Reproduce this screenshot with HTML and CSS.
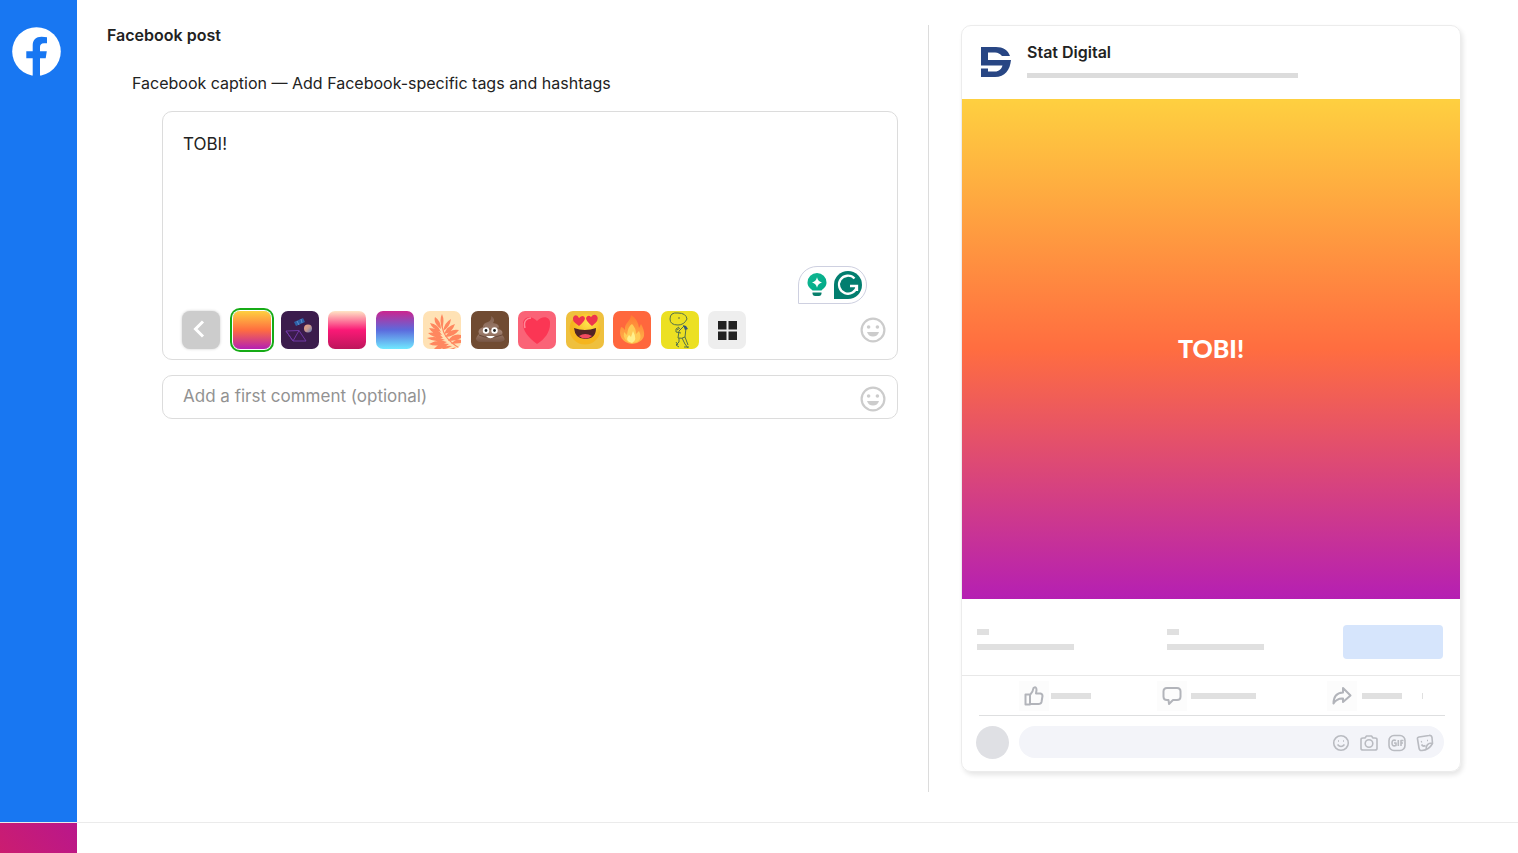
FILE: index.html
```html
<!DOCTYPE html>
<html lang="en">
<head>
<meta charset="utf-8">
<title>Facebook post</title>
<link rel="stylesheet" href="styles.css">
</head>
<body>
<svg class="defs" aria-hidden="true">
  <defs>
    <symbol id="smile" viewBox="0 0 26 26">
      <circle cx="13" cy="13" r="11.4" fill="none" stroke="currentColor" stroke-width="2.2"/>
      <circle cx="8.6" cy="10" r="1.8" fill="currentColor"/><circle cx="17.4" cy="10" r="1.8" fill="currentColor"/>
      <path d="M7 15H19Q17.5 19.5 13 19.5T7 15Z" fill="currentColor"/>
    </symbol>
    <radialGradient id="yellow" cx=".6" cy=".3"><stop offset="0" stop-color="#ffe44d"/><stop offset="1" stop-color="#f5b51e"/></radialGradient>
    <linearGradient id="brown" x2="0" y2="1"><stop offset="0" stop-color="#80604f"/><stop offset=".6" stop-color="#a08070"/><stop offset="1" stop-color="#765443"/></linearGradient>
    <linearGradient id="flame" x2="0" y2="1"><stop offset="0" stop-color="#ff7b32"/><stop offset="1" stop-color="#ffb64b"/></linearGradient>
    <linearGradient id="planet" x2="1" y2="1"><stop stop-color="#f0a080"/><stop offset=".5" stop-color="#c99a90"/><stop offset="1" stop-color="#5673b5"/></linearGradient>
    <linearGradient id="bulb" x2="1" y2="1"><stop stop-color="#11b792"/><stop offset="1" stop-color="#00a987"/></linearGradient>
  </defs>
</svg>

<section class="network">
  <aside class="rail">
    <svg class="rail-logo" viewBox="0 0 49 49" role="img" aria-label="Facebook">
      <circle cx="24.5" cy="24.5" r="24.3" fill="#fff"/>
      <path d="M20.7 49V31.2H14.3V24.3H20.7V18.6C20.7 12.8 24 9.8 29.5 9.8C31.5 9.8 33.5 10 35 10.3V16.2H32C29 16.2 28 18 28 20V24.3H34.8L33.7 31.2H28V49Z" fill="#1877f2"/>
    </svg>
  </aside>

  <main class="editor">
    <h1 class="title">Facebook post</h1>
    <label class="caption-label" for="caption">Facebook caption — Add Facebook-specific tags and hashtags</label>

    <div class="caption-box">
      <textarea class="caption" id="caption" spellcheck="false">TOBI!</textarea>
      <div class="assistant">
        <svg width="20" height="24" viewBox="0 0 20 24"><path d="M5.5 17.500C3 15 .5 13.500 .5 9.500A9.500 9.500 0 0 1 19.500 9.500C19.500 13.500 17 15 14.500 17.500Z" fill="url(#bulb)"/><path d="M10 4.200Q11 8.500 15 9.500Q11 10.500 10 14.800Q9 10.500 5 9.500Q9 8.500 10 4.200Z" fill="#fff"/><path d="M5.500 19.500H14.500V21Q14 23 12 23H8Q6 23 5.500 21Z" fill="#087f6c"/></svg>
        <svg width="28" height="28" viewBox="0 0 28 28"><path d="M0 28V14A14 14 0 1 1 14 28Z" fill="#027e6f"/><path d="M20.500 7.500A9 9 0 1 0 22.900 15H16M23 14.500V20" fill="none" stroke="#fff" stroke-width="2.300"/></svg>
      </div>
      <div class="toolbar">
        <button class="back" aria-label="Back"><svg width="38" height="38" viewBox="0 0 38 38"><path d="M21 10.500L13.500 18L21 25.500" fill="none" stroke="#fff" stroke-width="3"/></svg></button>
        <div class="swatches">
          <button class="swatch sunset selected" aria-label="Sunset"></button>
          <button class="swatch" aria-label="Space"><svg viewBox="0 0 38 38"><path fill="#3b1c4c" d="M0 0H38V38H0Z"/><path d="M5 20L18 19.500L25 30H12ZL12 30L18 19.500" fill="none" stroke="#7139a5"/><path d="M13 11L22 7L24 11L15 15Z" fill="#2d61a8"/><path d="M16 10L18 14M20 8L21 12" stroke="#5b8fcc"/><circle cx="27" cy="17.500" r="4" fill="url(#planet)"/></svg></button>
          <button class="swatch pink" aria-label="Pink"></button>
          <button class="swatch violet" aria-label="Violet"></button>
          <button class="swatch" aria-label="Leaves"><svg viewBox="0 0 38 38"><path fill="#ffe2b5" d="M0 0H38V38H0Z"/><g fill="#ff875f"><path d="M19 17Q16 9 19 3Q22 10 19 17ZM18 18Q10 12 12 6Q18 10 18 18ZM20 20Q22 11 28 8Q27 16 20 20ZM18 21Q9 18 7 12Q15 13 18 21ZM21 23Q24 15 32 13Q29 22 21 23ZM19 24Q9 23 6 17Q15 17 19 24ZM22 26Q27 17 36 19Q31 26 22 26ZM20 27Q10 27 5 22Q15 20 20 27ZM25 30Q30 22 38 24V27Q33 30 25 30ZM22 29Q12 32 4 27Q14 24 22 29ZM28 33Q33 27 38 29V32ZM24 31Q14 37 6 33Q15 27 24 31ZM26 33Q18 40 11 38Q17 31 26 33ZM29 35Q24 38 21 38H19Q22 34 29 35ZM33 36L31 38H27Z"/></g><path d="M19 14Q20 28 38 38" fill="none" stroke="#ff875f" stroke-width="1.200"/></svg></button>
          <button class="swatch" aria-label="Poop"><svg viewBox="0 0 38 38"><path fill="#704b32" d="M0 0H38V38H0Z"/><path d="M20 5Q25 8 22 12Q30 13 27 18Q33 19 31 24Q37 29 30 31H8Q2 28 8 23Q6 18 12 16Q12 12 17 11Q21 9 20 5Z" fill="url(#brown)"/><path d="M13 16Q20 20 27 17M8 24Q18 29 31 24" fill="none" stroke="#67483a"/><circle cx="15" cy="19.500" r="3.200" fill="#fff"/><circle cx="23.500" cy="19.500" r="3.200" fill="#fff"/><circle cx="15" cy="19.500" r="1.400" fill="#222"/><circle cx="23.500" cy="19.500" r="1.400" fill="#222"/><path d="M15 25H24Q19 29.500 15 25Z" fill="#fff"/></svg></button>
          <button class="swatch" aria-label="Heart"><svg viewBox="0 0 38 38"><path fill="#fa6377" d="M0 0H38V38H0Z"/><path d="M19 33C10 26 5 20 5 13C5 5 14 4 19 10C24 4 33 5 32 13C32 21 27 28 19 33Z" fill="#fb3654"/><path d="M7 17C5 10 9 7 13 7" fill="none" stroke="#ff8997" stroke-width="1.500"/></svg></button>
          <button class="swatch" aria-label="Heart eyes"><svg viewBox="0 0 38 38"><path fill="#efc03e" d="M0 0H38V38H0Z"/><circle cx="19" cy="18" r="15.500" fill="url(#yellow)"/><path d="M8 17Q19 21 30 17Q30 28 19 28Q9 28 8 17Z" fill="#522425"/><path d="M13 25Q19 21 26 25Q19 30 13 25Z" fill="#f24a60"/><path d="M13 15Q4 9 8 5Q11 3 13 7Q17 3 19 7Q19 10 13 15ZM26 15Q20 10 20 7Q22 3 25 6Q28 2 31 5Q34 9 26 15Z" fill="#ee344c"/></svg></button>
          <button class="swatch" aria-label="Fire"><svg viewBox="0 0 38 38"><path fill="#ff673d" d="M0 0H38V38H0Z"/><path d="M19 33C9 32 5 24 8 16Q10 16 12 19C11 12 18 10 18 4Q25 8 26 17L28 13Q36 27 24 32Z" fill="url(#flame)"/><path d="M19 32Q9 30 11 21L14 24Q15 15 19 13Q23 17 23 23L26 20Q31 31 19 32Z" fill="#ffcb55"/><path d="M19 32Q11 30 16 24L18 26L20 20Q25 29 19 32Z" fill="#fff08c"/></svg></button>
          <button class="swatch" aria-label="Walking doodle"><svg viewBox="0 0 38 38"><path fill="#ece022" d="M0 0H38V38H0Z"/><g fill="none" stroke="#52704c"><path d="M9 8Q9 1 17 2Q25 2 26 8Q23 14 17 14Q9 14 9 8ZM23 15L18 20L17 27Q21 28 24 26L25 17M18 16L15 18V21L20 22M19 17L16 19M18 27L18 31L15 34L18 36M21 27L24 33L27 37M24 26L27 34M15 31L17 34M23 36H28"/></g><path d="M22 14L25 15L27 18L24 19Z" fill="#34567a"/><circle cx="18" cy="7" r=".7" fill="#345"/></svg></button>
          <button class="swatch" aria-label="All backgrounds"><svg viewBox="0 0 38 38"><path fill="#eee" d="M0 0H38V38H0Z"/><path d="M10 10H18.500V18.500H10ZM20.500 10H29V18.500H20.500ZM10 20.500H18.500V29H10ZM20.500 20.500H29V29H20.500Z" fill="#222"/></svg></button>
        </div>
        <button class="emoji" aria-label="Insert emoji"><svg width="26" height="26"><use href="#smile"/></svg></button>
      </div>
    </div>

    <div class="comment-box">
      <input class="comment" type="text" aria-label="First comment" placeholder="Add a first comment (optional)">
      <button class="emoji" aria-label="Insert emoji in comment"><svg width="26" height="26"><use href="#smile"/></svg></button>
    </div>
  </main>

  <aside class="preview-column">
    <article class="preview">
      <header class="preview-head">
        <svg class="avatar" viewBox="0 0 30 30" role="img" aria-label="Stat Digital logo"><path d="M0 0H15C22 0 27 3 29 9H21C19 7 17 5.500 14 5.500H7V13H30C29 23 24 30 14 30H0V21.500H7V24.500H14C18 24.500 20.500 22 21.500 18.500H0Z" fill="#284684"/></svg>
        <div class="identity">
          <h2 class="page-name">Stat Digital</h2>
          <span class="bar bar-head"></span>
        </div>
      </header>
      <div class="post-text">TOBI!</div>
      <div class="stats">
        <div class="stat"><span class="bar bar-tiny"></span><span class="bar bar-long"></span></div>
        <div class="stat"><span class="bar bar-tiny"></span><span class="bar bar-long"></span></div>
        <span class="cta"></span>
      </div>
      <div class="actions">
        <div class="action like"><span class="icon-tile"><svg width="20" height="20" viewBox="0 0 20 20"><path d="M1.500 8.500H6V18.500H1.500ZM6 9Q9 6 9.500 2Q12.500 0 12.500 4L12 7.500H16.500Q18.500 8 18.500 10L17.500 16Q17 18 14.500 18H6Z"/></svg></span><span class="bar bar-action"></span></div>
        <div class="action reply"><span class="icon-tile"><svg width="20" height="20" viewBox="0 0 20 20"><path d="M5 2H15Q18.500 2 18.500 5.500V10.500Q18.500 14 15 14H11L7 18L6.500 14H5Q1.500 14 1.500 10.500V5.500Q1.500 2 5 2Z"/></svg></span><span class="bar bar-reply"></span></div>
        <div class="action share"><span class="icon-tile"><svg width="20" height="20" viewBox="0 0 20 20"><path d="M11 2L18.500 9.500L11 16V12.500Q5 12 1.500 17.500Q1.500 7 11 6.500Z"/></svg></span><span class="bar bar-action"></span><span class="bar bar-tick"></span></div>
      </div>
      <div class="respond">
        <span class="respond-avatar"></span>
        <div class="respond-field">
          <svg width="18" height="18" viewBox="0 0 18 18"><circle cx="9" cy="9" r="7.300"/><path d="M5.500 10.500Q9 14.500 12.500 10.500M6 7H7M11 7H12"/></svg>
          <svg width="18" height="18" viewBox="0 0 18 18"><path d="M1 5.500Q1 4 3 4H5L6.500 2H11.500L13 4H15Q17 4 17 5.500V14.500Q17 16 15 16H3Q1 16 1 14.500Z"/><circle cx="9" cy="9.500" r="3.800"/></svg>
          <svg width="18" height="18" viewBox="0 0 18 18"><rect x="1" y="1.500" width="16" height="15" rx="5"/><path d="M8 6.500Q4 5 4 9Q4 13 8 11.500V9H6M10.300 6V12M13 12V6.500H15.500M13 9H15"/></svg>
          <svg width="18" height="18" viewBox="0 0 18 18"><path d="M1.500 5Q1 3.500 3 3L13 1.500Q15.500 1 16 3.500L16.500 9.500Q13 16 6 16.500Q3.500 17 3 14ZM16 9Q10 9 10 15.500M5 8L6 7.500M11 6.500H12M5.500 10.500Q7 13 9.500 11.500"/></svg>
        </div>
      </div>
    </article>
  </aside>
</section>

<section class="network next">
  <aside class="rail rail-instagram"></aside>
</section>
</body>
</html>
```
FILE: styles.css
```css
* { box-sizing: border-box; }

body {
  margin: 0;
  height: 100vh;
  overflow: hidden;
  display: flex;
  flex-direction: column;
  background: #fff;
  color: #222;
  font-family: Inter, "Liberation Sans", sans-serif;
}

.defs { position: absolute; width: 0; height: 0; }
button { padding: 0; border: 0; background: none; font: inherit; cursor: pointer; }
svg { display: block; }

.network { display: flex; flex: 1; border-bottom: 1px solid #ebebeb; }
.next { flex: 0 0 30px; border: 0; }

.rail {
  flex: 0 0 77px;
  padding: 27px 16px 0 12px;
  background: #1877f2;
}
.rail-logo { width: 49px; height: 49px; }
.rail-instagram { padding: 0; background: linear-gradient(50deg, #cb1d70, #b9178b); }

.editor {
  flex: 1;
  min-width: 0;
  margin: 25px 0 30px;
  padding: 0 30px;
  border-right: 1px solid #dcdcdc;
}
.title { margin: 0; font-size: 16px; line-height: 20px; font-weight: 600; }
.caption-label {
  display: block;
  margin: 28px 0 17px 25px;
  font-size: 16px;
  line-height: 21px;
}

.caption-box, .comment-box {
  position: relative;
  margin-left: 55px;
  border: 1px solid #dcdcdc;
  border-radius: 10px;
}
.caption-box { padding: 20px 11px 8px 19px; }
.caption, .comment {
  display: block;
  width: 100%;
  border: 0;
  outline: 0;
  background: none;
  color: #222;
  font: 17px/24px Inter, "Liberation Sans", sans-serif;
}
.caption { height: 177px; padding: 0 1px; resize: none; }
.comment { padding: 0; height: 40px; }
.comment::placeholder { color: #929292; opacity: 1; }

.assistant {
  position: absolute;
  right: 30px;
  bottom: 55px;
  display: flex;
  align-items: center;
  gap: 7px;
  width: 69px;
  height: 38px;
  padding: 0 4px 0 8px;
  border: 1px solid #ced0e0;
  border-radius: 19px 19px 19px 0;
  background: #fff;
}

.toolbar { display: flex; align-items: center; }
.back {
  width: 38px;
  height: 38px;
  border-radius: 8px;
  background: #ccc;
  box-shadow: 0 0 3px #ccc;
}
.swatches {
  display: flex;
  justify-content: space-between;
  width: 513px;
  margin: 2px auto 2px 13px;
}
.swatch { width: 38px; height: 38px; border-radius: 7px; }
.swatch svg { width: 38px; height: 38px; border-radius: 7px; }
.sunset, .post-text { background: linear-gradient(#fed040, #ff6d40 50%, #b51fb3); }
.selected { box-shadow: 0 0 0 1px #fff, 0 0 0 3px #16ab16; }
.pink { background: linear-gradient(#ffe5c5, #fa1976 50%, #bd165b); }
.violet { background: linear-gradient(#cc248e, #5c6add 50%, #70e9ff); }
.emoji { width: 26px; height: 26px; color: #ccc; }

.comment-box {
  display: flex;
  align-items: center;
  gap: 12px;
  margin-top: 15px;
  padding: 0 11px 2px 20px;
}
.comment-box .emoji { flex: none; margin-top: 6px; }

.preview-column { flex: 0 0 589px; padding: 25px 57px 0 32px; }
.preview {
  border: 1px solid #ececec;
  border-radius: 10px;
  box-shadow: 2px 3px 5px #e6e6e6;
  overflow: hidden;
}
.preview-head { display: flex; gap: 16px; height: 73px; padding: 15px 19px; }
.avatar { width: 30px; height: 30px; margin-top: 6px; }
.identity { flex: 1; }
.page-name { margin: 0 0 10px; font-size: 16px; line-height: 22px; font-weight: 600; }
.bar { display: block; height: 6px; background: #e0e0e0; }
.bar-head { width: 271px; height: 5px; background: #dcdcdc; }

.post-text {
  display: grid;
  place-items: center;
  aspect-ratio: 498 / 500;
  padding-bottom: 3px;
  color: #fff;
  font: 900 25px/32px Lato, "Liberation Sans", sans-serif;
}

.stats {
  display: grid;
  grid-template-columns: 190px 1fr 100px;
  align-items: center;
  height: 77px;
  padding: 9px 17px 0 15px;
  border-bottom: 1px solid #e8e8e8;
}
.stat { display: grid; gap: 9px; padding-bottom: 4px; }
.bar-tiny { width: 12px; }
.bar-long { width: 97px; }
.cta { height: 34px; border-radius: 4px; background: #d6e5fc; }

.actions {
  display: flex;
  height: 40px;
  margin: 0 15px 0 17px;
  border-bottom: 1px solid #dedfe0;
}
.action { display: flex; align-items: center; }
.icon-tile { display: grid; place-items: center; width: 30px; height: 30px; background: #fcfcfc; }
.actions svg, .respond-field svg { fill: none; stroke: #b2b4ba; stroke-width: 2; stroke-linejoin: round; }
.like { margin-left: 40px; }
.reply { margin-left: 66px; }
.share { margin-left: 71px; }
.bar-action { width: 40px; margin-left: 2px; }
.bar-reply { width: 65px; margin-left: 4px; }
.share .bar-action { margin-left: 5px; }
.bar-tick { width: 1px; margin-left: 20px; }

.respond { display: flex; align-items: center; gap: 10px; height: 55px; padding: 0 16px 3px 14px; }
.respond-avatar { width: 33px; height: 33px; border-radius: 50%; background: #dfe0e4; }
.respond-field {
  display: flex;
  flex: 1;
  align-items: center;
  justify-content: flex-end;
  gap: 10px;
  height: 32px;
  padding: 2px 10px 0 0;
  border-radius: 16px;
  background: #f3f4f9;
}
.respond-field svg { stroke: #b9bbc1; stroke-width: 1.6; }
```
